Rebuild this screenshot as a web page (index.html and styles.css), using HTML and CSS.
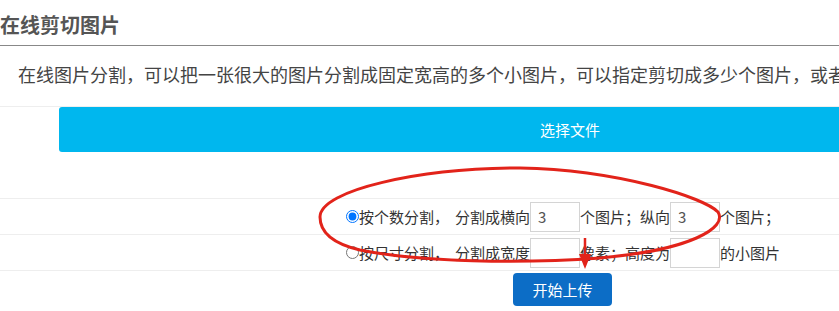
FILE: index.html
```html
<!DOCTYPE html>
<html lang="zh-CN">
<head>
  <meta charset="UTF-8">
  <meta name="viewport" content="width=device-width, initial-scale=1.0">
  <title>在线剪切图片</title>
  <link rel="stylesheet" href="styles.css">
</head>
<body>
  <div class="page">
    <!-- Title -->
    <h1 class="title">在线剪切图片</h1>

    <!-- Intro -->
    <p class="intro">在线图片分割，可以把一张很大的图片分割成固定宽高的多个小图片，可以指定剪切成多少个图片，或者按照尺寸剪切图片。</p>

    <!-- File picker -->
    <div class="upload-row">
      <button class="pick-btn">选择文件</button>
    </div>

    <!-- Split options -->
    <div class="option-row">
      <input type="radio" name="mode" id="by-count" checked>
      <label for="by-count">按个数分割，</label>
      <span class="gap">分割成横向</span>
      <input type="text" class="num-input" value="3">
      <span>个图片；纵向</span>
      <input type="text" class="num-input" value="3">
      <span>个图片；</span>
    </div>
    <div class="option-row">
      <input type="radio" name="mode" id="by-size">
      <label for="by-size">按尺寸分割，</label>
      <span class="gap">分割成宽度</span>
      <input type="text" class="num-input" value="">
      <span>像素；高度为</span>
      <input type="text" class="num-input" value="">
      <span>的小图片</span>
    </div>

    <div class="submit-row">
      <button class="submit-btn">开始上传</button>
    </div>

    <!-- Red annotation drawn over the options -->
    <svg class="annotation" width="839" height="311" viewBox="0 0 839 311">
      <path d="M 320 217 C 320 190, 420 168, 520 168 C 620 170, 705 198, 718 212 C 728 228, 690 250, 600 258 C 520 264, 420 262, 360 250 C 330 243, 320 230, 320 217 Z"
            fill="none" stroke="#e2231a" stroke-width="3"/>
      <line x1="585" y1="238" x2="585" y2="258" stroke="#e2231a" stroke-width="2.5"/>
      <polygon points="579,254 591,254 585,269" fill="#e2231a"/>
    </svg>
  </div>
</body>
</html>
```

FILE: styles.css
```css
/* Reset */
* {
  margin: 0;
  padding: 0;
  box-sizing: border-box;
}

html, body {
  overflow: hidden;
}

body {
  font-family: 'Noto Sans CJK SC', 'Noto Sans', sans-serif;
  background-color: #ffffff;
  color: #333;
}

.page {
  position: relative;
  width: 839px;
  height: 311px;
}

/* Title */
.title {
  font-size: 20px;
  font-weight: bold;
  color: #555;
  padding-top: 4px;
  line-height: 41px;
  height: 46px;
  border-bottom: 1px solid #888;
  white-space: nowrap;
}

/* Intro */
.intro {
  font-size: 18px;
  color: #444;
  height: 61px;
  line-height: 56px;
  padding-left: 18px;
  white-space: nowrap;
  border-bottom: 1px solid #eee;
}

/* File picker */
.upload-row {
  height: 92px;
  border-bottom: 1px solid #eee;
  padding-left: 59px;
}

.pick-btn {
  display: block;
  width: 1022px;
  height: 45px;
  border: none;
  border-radius: 3px;
  background-color: #00b7ee;
  color: #fff;
  font-family: inherit;
  font-size: 15px;
  cursor: pointer;
}

/* Options */
.option-row {
  display: flex;
  align-items: center;
  height: 36px;
  padding-left: 346px;
  border-bottom: 1px solid #eee;
  font-size: 15px;
  line-height: 20px;
  white-space: nowrap;
}

.option-row input[type="radio"] {
  width: 13px;
  height: 13px;
  margin: 0 0 0 0;
}

.option-row .gap {
  margin-left: 6px;
}

.num-input {
  width: 50px;
  height: 30px;
  border: 1px solid #d4d4d4;
  padding-left: 7px;
  font-family: inherit;
  font-size: 15px;
  color: #555;
  outline: none;
}

/* Submit */
.submit-row {
  padding-top: 2px;
  padding-left: 513px;
}

.submit-btn {
  width: 99px;
  height: 33px;
  border: none;
  border-radius: 4px;
  background-color: #0c6dc6;
  color: #fff;
  font-family: inherit;
  font-size: 15px;
  cursor: pointer;
}

/* Annotation overlay */
.annotation {
  position: absolute;
  left: 0;
  top: 0;
  pointer-events: none;
}
```
